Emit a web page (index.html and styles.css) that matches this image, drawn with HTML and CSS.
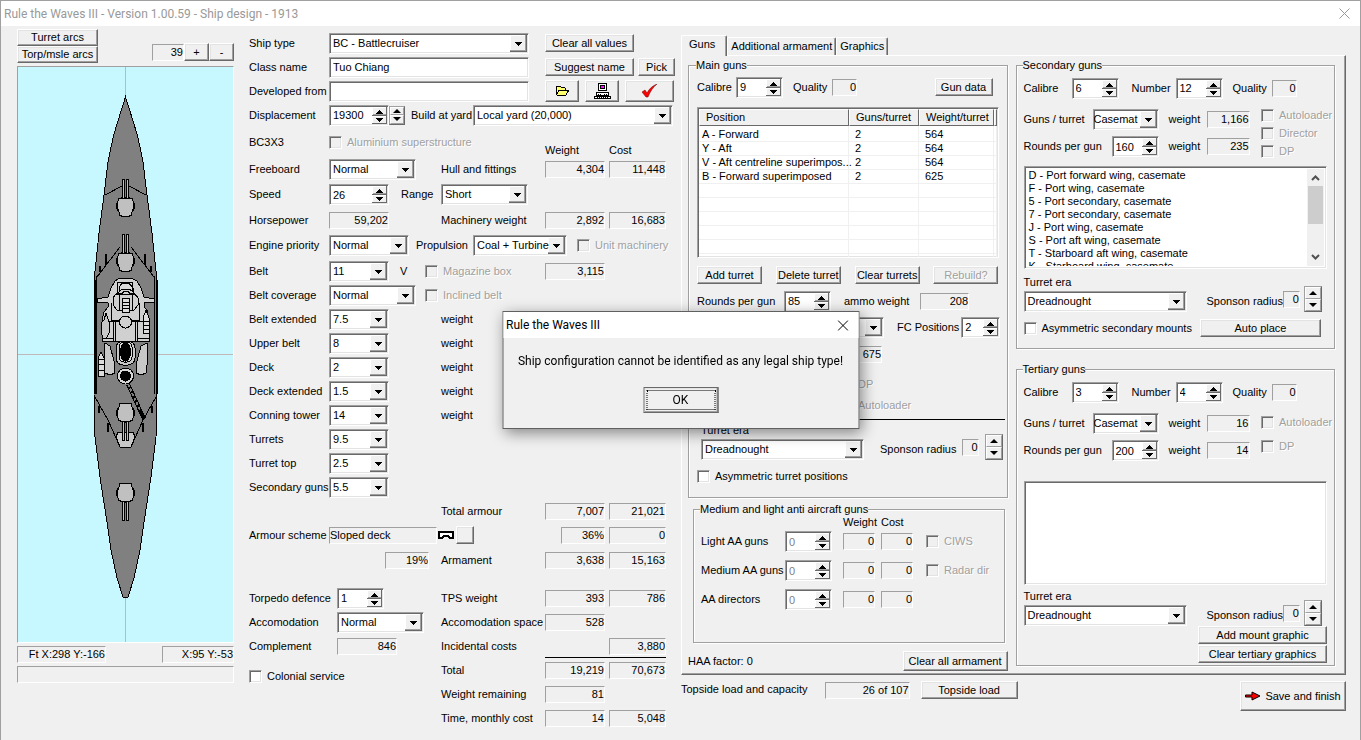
FILE: index.html
```html
<!DOCTYPE html>
<html lang="en">
<head>
    <meta charset="UTF-8">
    <meta name="viewport" content="width=device-width, initial-scale=1.0">
    <title>Rule the Waves III - Ship design</title>
    <link rel="stylesheet" href="styles.css">
</head>
<body>
    <header class="titlebar">
        <h1>Rule the Waves III - Version 1.00.59 - Ship design - 1913</h1>
        <button class="close" aria-label="Close window">
            <svg width="11" height="11" viewBox="0 0 11 11"><path d="M0.5 0.5l10 10M10.5 0.5l-10 10" stroke="#999" fill="none"/></svg>
        </button>
    </header>

    <main class="window">
        <!-- Ship drawing -->
        <section class="ship-panel">
            <div class="ship-tools">
                <div class="arcs">
                    <button class="btn">Turret arcs</button>
                    <button class="btn">Torp/msle arcs</button>
                </div>
                <div class="zoom">
                    <output class="readout">39</output>
                    <button class="btn">+</button>
                    <button class="btn">-</button>
                </div>
            </div>

            <svg class="ship" viewBox="18 67 215 575" shape-rendering="crispEdges">
                <defs>
                    <g id="turret" stroke="#000" fill="#c0c0c0">
                        <circle cx="0" cy="0" r="9" fill="#a8a8a8"/>
                        <path d="M-5 -8h10l2 1l1 4v5l-2 5v2l-2 1h-8l-2 -1v-2l-2 -5v-5l1 -4z"/>
                        <path d="M-3 -27v19h2v-19zM1 -27v19h2v-19z"/>
                    </g>
                </defs>
                <path d="M125.5 67V642M18 354.5H233" stroke="#c0b8b8"/>
                <path d="M125.5 97L129 108L133 121L137 134L140 147L143 162L147 195L152 233L155 262L157 280V394L156 437L151 477L147 503L144 522L140 550L134 578L128 597H123L117 578L111 550L107 522L104 503L100 477L95 437L94 394V280L96 262L99 233L104 195L108 162L111 147L114 134L118 121L122 108Z" fill="#808080" stroke="#000"/>
                <path d="M94.5 280V394M157 280V394" stroke="#000" stroke-width="2"/>
                <path d="M105 195L122 186M146 195L129 186M97 277L120 247M154 277L131 247M96.500 276V394M154.500 276V394M95 397L108 420L120 447M156 397L143 420L131 447" stroke="#000" fill="none"/>
                <path d="M106 254v11M145 254v11M100 266v6M151 266v6M99 406v7M152 406v7M108 423v9M143 423v9M95 344v4M157 344v4" stroke="#000" stroke-width="2"/>
                <path d="M118 432H133L135 437L131 447H120L116 437Z" fill="#c8c8c8" stroke="#000"/>

                <!-- bridge -->
                <g fill="#d0d0d0" stroke="#000">
                    <path d="M120 278H131L137 281L141 288L144 297L154 299V302L144 303V307L147 310V320H149V341H102V320L104 312L108 307V303L97 302V299L108 297L111 288L115 281Z"/>
                    <path d="M111 303V321H102M139 303V321H149M113 321V341M115 321V341M135 321V341M137 321V341M102 338H113M137 338H149" fill="none"/>
                    <path d="M118 282H132L134 293H117Z"/>
                    <path d="M120 286L122 283H129L132 287V291L129 289H122L119 292Z" fill="#dcdcdc"/>
                    <path d="M116 294H135L138 298V305L134 310H117L113 305V298Z"/>
                    <path d="M119 294V310M132 294V310" fill="none"/>
                    <path d="M122 294l2 -3h4l2 3z"/>
                    <path d="M122 298H129V312H122ZM122 302H129M122 305H129M122 308H129" fill="#dcdcdc"/>
                    <path d="M111 321H120M131 321H139" stroke-width="2"/>
                    <circle cx="125.500" cy="322" r="6"/>
                </g>

                <!-- boats -->
                <g fill="#c8c8c8" stroke="#000">
                    <path d="M106 313L109 322V333L106 339L103 338L101 331V323L104 320Z"/>
                    <path d="M146 310L149 318V333H143V318ZM143 321H149M143 325H149M143 329H149" fill="#dcdcdc"/>
                    <path d="M101 352L104 358V376H98V358ZM98 359H104M98 364H104M98 370H104" fill="#dcdcdc"/>
                    <path d="M105 343L110 346L114 361L115 373L110 375L105 373L104 358Z"/>
                    <path d="M147 343L141 346L137 361L136 373L141 375L146 373L148 358Z"/>
                </g>

                <!-- funnels and crane -->
                <g stroke="#000">
                    <rect x="116" y="341" width="19" height="24" rx="7" fill="#c8c8c8"/>
                    <rect x="119" y="342" width="13" height="20" rx="5" fill="#d8d8d8"/>
                    <ellipse cx="125.500" cy="352" rx="5" ry="9" fill="#000"/>
                    <circle cx="125.500" cy="376" r="8" fill="#d8d8d8"/>
                    <circle cx="125.500" cy="376" r="5" fill="#000"/>
                    <path d="M128 384L144 419" stroke-width="4"/>
                    <path d="M128 384L140 410" stroke="#808080" stroke-width="2" stroke-dasharray="3 2"/>
                </g>

                <use href="#turret" transform="translate(125.500 206)"/>
                <use href="#turret" transform="translate(125.500 261)"/>
                <use href="#turret" transform="translate(125.500 413) rotate(180)"/>
                <use href="#turret" transform="translate(125.500 493) rotate(180)"/>
            </svg>

            <div class="coords">
                <output class="readout feet">Ft X:298 Y:-166</output>
                <output class="readout grid-pos">X:95 Y:-53</output>
            </div>
            <output class="readout status"></output>
        </section>

        <!-- Design form -->
        <section class="design">
            <div class="row top">
                <div class="cell"><label class="name" for="shiptype">Ship type</label><select id="shiptype" class="combo long"><option>BC - Battlecruiser</option></select></div>
                <div class="actions"><button class="btn wide">Clear all values</button></div>
            </div>
            <div class="row top">
                <div class="cell"><label class="name" for="classname">Class name</label><input type="text" id="classname" class="edit long" value="Tuo Chiang"></div>
                <div class="actions"><button class="btn wide">Suggest name</button><button class="btn pick">Pick</button></div>
            </div>
            <div class="row top">
                <div class="cell"><label class="name" for="developed">Developed from</label><input type="text" id="developed" class="edit long"></div>
                <div class="actions icons">
                    <button class="btn icon" aria-label="Open">
                        <svg width="15" height="12" viewBox="0 0 15 12" shape-rendering="crispEdges"><path d="M1 9V2L2 1H5L6 2H9L10 3V5H14L11 10H2Z" fill="#ffff70" stroke="#000"/><path d="M2 9L4 5H10" fill="none" stroke="#000"/></svg>
                    </button>
                    <button class="btn icon" aria-label="Print">
                        <svg width="17" height="17" viewBox="0 0 17 17" shape-rendering="crispEdges"><path d="M4.500 .5h8v7h-8z" fill="#fff" stroke="#000"/><path d="M6.500 2.500h4v3h-4z" fill="#00c040" stroke="#000"/><path d="M8 3h1v2H8z" fill="#f0f"/><path d="M2.500 9.500h12v3h-12zM.5 13.500h16v2h-16z" fill="#fff" stroke="#000"/><path d="M4 11.500h3M10 11.500h3M3 14.500h11" stroke="#000" stroke-dasharray="1 1"/></svg>
                    </button>
                    <button class="btn icon check-btn" aria-label="Check design">
                        <svg width="17" height="14" viewBox="0 0 17 14"><path d="M1 8L4 6L6 9C8 5 11 2 16 0C12 3 9 8 7 13H5Z" fill="#f00" stroke="#600" stroke-width=".5"/></svg>
                    </button>
                </div>
            </div>
            <div class="row">
                <div class="cell all">
                    <label class="name" for="displacement">Displacement</label><input type="number" id="displacement" class="spin mid" value="19300">
                    <span class="updown mini"><button aria-label="More"></button><button aria-label="Less"></button></span>
                    <label class="yard" for="yard">Build at yard</label><select id="yard" class="combo long"><option>Local yard (20,000)</option></select>
                </div>
            </div>
            <div class="row heads">
                <div class="cell"><span class="name">BC3X3</span><label class="check off"><input type="checkbox" disabled>Aluminium superstructure</label></div>
                <span></span>
                <span class="head">Weight</span><span class="head cost">Cost</span>
            </div>
            <div class="row">
                <div class="cell"><label class="name" for="freeboard">Freeboard</label><select id="freeboard" class="combo wide"><option>Normal</option></select></div>
                <span>Hull and fittings</span><output class="readout">4,304</output><output class="readout cost">11,448</output>
            </div>
            <div class="row tall">
                <div class="cell all">
                    <label class="name" for="speed">Speed</label><input type="number" id="speed" class="spin mid" value="26">
                    <label class="range" for="range">Range</label><select id="range" class="combo wide"><option>Short</option></select>
                </div>
            </div>
            <div class="row">
                <div class="cell"><span class="name">Horsepower</span><output class="readout mid">59,202</output></div>
                <span>Machinery weight</span><output class="readout">2,892</output><output class="readout cost">16,683</output>
            </div>
            <div class="row tall">
                <div class="cell all">
                    <label class="name" for="engine">Engine priority</label><select id="engine" class="combo engine"><option>Normal</option></select>
                    <label class="prop" for="propulsion">Propulsion</label><select id="propulsion" class="combo propulsion"><option>Coal + Turbine</option></select>
                    <label class="check off unit"><input type="checkbox" disabled>Unit machinery</label>
                </div>
            </div>
            <div class="row">
                <div class="cell"><label class="name" for="belt">Belt</label><select id="belt" class="combo mid"><option>11</option></select><span class="belt-mark">V</span></div>
                <label class="check off hang"><input type="checkbox" disabled>Magazine box</label><output class="readout">3,115</output>
            </div>
            <div class="row">
                <div class="cell"><label class="name" for="coverage">Belt coverage</label><select id="coverage" class="combo wide"><option>Normal</option></select></div>
                <label class="check off hang"><input type="checkbox" disabled>Inclined belt</label>
            </div>
            <div class="row">
                <div class="cell"><label class="name" for="beltext">Belt extended</label><select id="beltext" class="combo mid"><option>7.5</option></select></div><span>weight</span>
            </div>
            <div class="row">
                <div class="cell"><label class="name" for="upper">Upper belt</label><select id="upper" class="combo mid"><option>8</option></select></div><span>weight</span>
            </div>
            <div class="row">
                <div class="cell"><label class="name" for="deck">Deck</label><select id="deck" class="combo mid"><option>2</option></select></div><span>weight</span>
            </div>
            <div class="row">
                <div class="cell"><label class="name" for="deckext">Deck extended</label><select id="deckext" class="combo mid"><option>1.5</option></select></div><span>weight</span>
            </div>
            <div class="row">
                <div class="cell"><label class="name" for="conning">Conning tower</label><select id="conning" class="combo mid"><option>14</option></select></div><span>weight</span>
            </div>
            <div class="row">
                <div class="cell"><label class="name" for="turrets">Turrets</label><select id="turrets" class="combo mid"><option>9.5</option></select></div>
            </div>
            <div class="row">
                <div class="cell"><label class="name" for="turrettop">Turret top</label><select id="turrettop" class="combo mid"><option>2.5</option></select></div>
            </div>
            <div class="row">
                <div class="cell"><label class="name" for="secguns">Secondary guns</label><select id="secguns" class="combo mid"><option>5.5</option></select></div>
            </div>
            <div class="row">
                <span></span><span>Total armour</span><output class="readout">7,007</output><output class="readout cost">21,021</output>
            </div>
            <div class="row">
                <div class="cell scheme"><span class="name">Armour scheme</span><output class="readout text">Sloped deck</output></div>
                <div class="scheme-pick">
                    <svg width="16" height="9" viewBox="0 0 16 9" shape-rendering="crispEdges"><path d="M1 1H15V7H12L10 5H6L4 7H1Z" fill="#fff" stroke="#000" stroke-width="2"/></svg>
                    <button class="btn square" aria-label="Change armour scheme"></button>
                </div>
                <output class="readout short">36%</output><output class="readout cost">0</output>
            </div>
            <div class="row tall">
                <div class="cell scheme"><output class="readout percent">19%</output></div>
                <span>Armament</span><output class="readout">3,638</output><output class="readout cost">15,163</output>
            </div>
            <div class="row spaced">
                <div class="cell"><label class="name far" for="torpedo">Torpedo defence</label><input type="number" id="torpedo" class="spin" value="1"></div>
                <span>TPS weight</span><output class="readout">393</output><output class="readout cost">786</output>
            </div>
            <div class="row">
                <div class="cell"><label class="name far" for="accom">Accomodation</label><select id="accom" class="combo wide"><option>Normal</option></select></div>
                <span>Accomodation space</span><output class="readout">528</output>
            </div>
            <div class="row">
                <div class="cell"><span class="name far">Complement</span><output class="readout">846</output></div>
                <span>Incidental costs</span><span></span><output class="readout cost">3,880</output>
            </div>
            <hr class="sum">
            <div class="row">
                <label class="check colonial"><input type="checkbox">Colonial service</label>
                <span>Total</span><output class="readout">19,219</output><output class="readout cost">70,673</output>
            </div>
            <div class="row">
                <span></span><span>Weight remaining</span><output class="readout">81</output>
            </div>
            <div class="row">
                <span></span><span>Time, monthly cost</span><output class="readout">14</output><output class="readout cost">5,048</output>
            </div>
        </section>

        <!-- Armament -->
        <section class="armament">
            <nav class="tabs">
                <button class="tab active">Guns</button>
                <button class="tab">Additional armament</button>
                <button class="tab">Graphics</button>
            </nav>
            <div class="pane">
                <div class="col">
                    <fieldset class="main-guns">
                        <legend>Main guns</legend>
                        <div class="calibre main">
                            <label for="maincal">Calibre</label><input type="number" id="maincal" class="spin" value="9">
                            <span>Quality</span><output class="readout tiny">0</output>
                            <button class="btn">Gun data</button>
                        </div>
                        <div class="listview">
                            <table>
                                <thead><tr><th class="pos">Position</th><th class="guns">Guns/turret</th><th class="wt">Weight/turret</th><th></th></tr></thead>
                                <tbody>
                                    <tr><td>A - Forward</td><td>2</td><td>564</td><td></td></tr>
                                    <tr><td>Y - Aft</td><td>2</td><td>564</td><td></td></tr>
                                    <tr><td>V - Aft centreline superimpos...</td><td>2</td><td>564</td><td></td></tr>
                                    <tr><td>B - Forward superimposed</td><td>2</td><td>625</td><td></td></tr>
                                    <tr><td></td><td></td><td></td><td></td></tr>
                                    <tr><td></td><td></td><td></td><td></td></tr>
                                    <tr><td></td><td></td><td></td><td></td></tr>
                                    <tr><td></td><td></td><td></td><td></td></tr>
                                    <tr><td></td><td></td><td></td><td></td></tr>
                                    <tr><td></td><td></td><td></td><td></td></tr>
                                </tbody>
                            </table>
                        </div>
                        <div class="turret-buttons">
                            <button class="btn">Add turret</button>
                            <button class="btn">Delete turret</button>
                            <button class="btn">Clear turrets</button>
                            <button class="btn" disabled>Rebuild?</button>
                        </div>
                        <div class="rounds">
                            <label for="mainrounds">Rounds per gun</label><input type="number" id="mainrounds" class="spin" value="85">
                            <span>ammo weight</span><output class="readout">208</output>
                        </div>
                        <div class="fire-control">
                            <select class="combo" aria-label="Fire control"><option></option></select>
                            <label for="fcpos">FC Positions</label><input type="number" id="fcpos" class="spin" value="2">
                        </div>
                        <div class="fc-weight"><output class="readout">675</output></div>
                        <div class="main-checks">
                            <label class="check off"><input type="checkbox" disabled>DP</label>
                            <label class="check off"><input type="checkbox" disabled>Autoloader</label>
                        </div>
                        <hr class="rule">
                        <div class="era">
                            <div class="era-pick"><label for="mainera">Turret era</label><select id="mainera" class="combo"><option>Dreadnought</option></select></div>
                            <span class="sponson">Sponson radius</span><output class="readout">0</output>
                            <span class="updown"><button aria-label="More"></button><button aria-label="Less"></button></span>
                        </div>
                        <div class="asym"><label class="check"><input type="checkbox">Asymmetric turret positions</label></div>
                    </fieldset>

                    <fieldset class="aa">
                        <legend>Medium and light anti aircraft guns</legend>
                        <div class="aa-row aa-head"><span></span><span></span><span>Weight</span><span>Cost</span></div>
                        <div class="aa-row">
                            <label for="lightaa">Light AA guns</label><input type="number" id="lightaa" class="spin" value="0" disabled>
                            <output class="readout">0</output><output class="readout">0</output>
                            <label class="check off"><input type="checkbox" disabled>CIWS</label>
                        </div>
                        <div class="aa-row">
                            <label for="medaa">Medium AA guns</label><input type="number" id="medaa" class="spin" value="0" disabled>
                            <output class="readout">0</output><output class="readout">0</output>
                            <label class="check off"><input type="checkbox" disabled>Radar dir</label>
                        </div>
                        <div class="aa-row">
                            <label for="aadir">AA directors</label><input type="number" id="aadir" class="spin" value="0" disabled>
                            <output class="readout">0</output><output class="readout">0</output>
                        </div>
                    </fieldset>

                    <div class="haa"><span>HAA factor: 0</span><button class="btn">Clear all armament</button></div>
                </div>

                <div class="col">
                    <fieldset class="secondary">
                        <legend>Secondary guns</legend>
                        <div class="calibre">
                            <label for="seccal">Calibre</label><input type="number" id="seccal" class="spin" value="6">
                            <label for="secnum">Number</label><input type="number" id="secnum" class="spin" value="12">
                            <span>Quality</span><output class="readout tiny">0</output>
                        </div>
                        <div class="mounts">
                            <div class="mount-rows">
                                <div class="mount"><div class="pair"><label for="secturret">Guns / turret</label><select id="secturret" class="combo"><option>Casemat</option></select></div><span>weight</span><output class="readout">1,166</output></div>
                                <div class="mount"><div class="pair"><label for="secrounds">Rounds per gun</label><input type="number" id="secrounds" class="spin" value="160"></div><span>weight</span><output class="readout">235</output></div>
                            </div>
                            <div class="mount-checks">
                                <label class="check off"><input type="checkbox" disabled>Autoloader</label>
                                <label class="check off"><input type="checkbox" disabled>Director</label>
                                <label class="check off"><input type="checkbox" disabled>DP</label>
                            </div>
                        </div>
                        <div class="listbox">
                            <ul>
                                <li>D - Port forward wing, casemate</li>
                                <li>F - Port wing, casemate</li>
                                <li>5 - Port secondary, casemate</li>
                                <li>7 - Port secondary, casemate</li>
                                <li>J - Port wing, casemate</li>
                                <li>S - Port aft wing, casemate</li>
                                <li>T - Starboard aft wing, casemate</li>
                                <li>K - Starboard wing, casemate</li>
                            </ul>
                            <div class="scrollbar">
                                <svg width="9" height="6" viewBox="0 0 9 6"><path d="M1 5L4.500 1.500L8 5" fill="none" stroke="#505050" stroke-width="2"/></svg>
                                <span class="thumb"></span>
                                <svg width="9" height="6" viewBox="0 0 9 6"><path d="M1 1L4.500 4.500L8 1" fill="none" stroke="#505050" stroke-width="2"/></svg>
                            </div>
                        </div>
                        <div class="era">
                            <div class="era-pick"><label for="secera">Turret era</label><select id="secera" class="combo"><option>Dreadnought</option></select></div>
                            <span class="sponson">Sponson radius</span><output class="readout">0</output>
                            <span class="updown"><button aria-label="More"></button><button aria-label="Less"></button></span>
                        </div>
                        <div class="asym"><label class="check"><input type="checkbox">Asymmetric secondary mounts</label><button class="btn auto">Auto place</button></div>
                    </fieldset>

                    <fieldset class="tertiary">
                        <legend>Tertiary guns</legend>
                        <div class="calibre">
                            <label for="tercal">Calibre</label><input type="number" id="tercal" class="spin" value="3">
                            <label for="ternum">Number</label><input type="number" id="ternum" class="spin" value="4">
                            <span>Quality</span><output class="readout tiny">0</output>
                        </div>
                        <div class="mounts">
                            <div class="mount-rows">
                                <div class="mount"><div class="pair"><label for="terturret">Guns / turret</label><select id="terturret" class="combo"><option>Casemat</option></select></div><span>weight</span><output class="readout">16</output></div>
                                <div class="mount"><div class="pair"><label for="terrounds">Rounds per gun</label><input type="number" id="terrounds" class="spin" value="200"></div><span>weight</span><output class="readout">14</output></div>
                            </div>
                            <div class="mount-checks loose">
                                <label class="check off"><input type="checkbox" disabled>Autoloader</label>
                                <label class="check off"><input type="checkbox" disabled>DP</label>
                            </div>
                        </div>
                        <div class="listbox"></div>
                        <div class="era">
                            <div class="era-pick"><label for="terera">Turret era</label><select id="terera" class="combo"><option>Dreadnought</option></select></div>
                            <span class="sponson">Sponson radius</span><output class="readout">0</output>
                            <span class="updown"><button aria-label="More"></button><button aria-label="Less"></button></span>
                        </div>
                        <div class="graphics">
                            <button class="btn">Add mount graphic</button>
                            <button class="btn">Clear tertiary graphics</button>
                        </div>
                    </fieldset>
                </div>
            </div>

            <div class="bottom">
                <span>Topside load and capacity</span>
                <output class="readout load">26 of 107</output>
                <button class="btn topside">Topside load</button>
                <button class="btn save">
                    <svg width="16" height="10" viewBox="0 0 16 10"><path d="M.5 4H7V1L15 5L7 9V6H.5Z" fill="#f00" stroke="#000"/></svg>
                    Save and finish
                </button>
            </div>
        </section>
    </main>

    <div class="dialog" role="dialog" aria-labelledby="dlgtitle">
        <div class="dialog-title">
            <h2 id="dlgtitle">Rule the Waves III</h2>
            <button class="close" aria-label="Close">
                <svg width="11" height="11" viewBox="0 0 11 11"><path d="M0.500 0.500l10 10M10.500 0.500l-10 10" stroke="#000" fill="none"/></svg>
            </button>
        </div>
        <p>Ship configuration cannot be identified as any legal ship type!</p>
        <button class="btn ok"><span>OK</span></button>
    </div>
</body>
</html>
```

FILE: styles.css
```css
* {
    box-sizing: border-box;
}
body {
    margin: 0;
    min-height: 100vh;
    background: #f0f0f0;
    border-top: 1px solid #a0a0a0;
    border-left: 1px solid #a0a0a0;
    border-right: 1px solid #a0a0a0;
    font: 11px/13px "Liberation Sans", Arial, sans-serif;
    color: #000;
}
button, input, select {
    font: inherit;
    color: inherit;
    margin: 0;
    border-radius: 0;
}
span, label, output {
    white-space: nowrap;
}

/* title bar */
.titlebar {
    display: flex;
    justify-content: space-between;
    align-items: center;
    height: 25px;
    padding: 0 10px 0 3px;
    background: #fff;
}
.titlebar h1 {
    margin: 0;
    font: 12px/16px Roboto, "Noto Sans", sans-serif;
    color: #999;
}
.close {
    display: flex;
    padding: 0;
    border: none;
    background: none;
}

/* shared controls */
.btn {
    height: 18px;
    padding: 0;
    border: 1px solid;
    border-color: #fff #696969 #696969 #fff;
    box-shadow: inset -1px -1px #a0a0a0, inset 1px 1px #e3e3e3;
    background: #f0f0f0;
    white-space: nowrap;
}
.btn:disabled {
    color: #a0a0a0;
    text-shadow: 1px 1px #fff;
}
.combo, .edit, .spin, .listview, .listbox {
    border: 1px solid;
    border-color: #a0a0a0 #fff #fff #a0a0a0;
    box-shadow: inset 1px 1px #696969, inset -1px -1px #e3e3e3;
    background-color: #fff;
}
.combo, .edit, .spin {
    flex: none;
    height: 21px;
    padding: 0 3px;
    outline: none;
    appearance: none;
}
.combo {
    width: 66px;
    padding-right: 17px;
    background-repeat: no-repeat;
    background-position: right 1px top 1px;
    background-image: url("data:image/svg+xml,%3Csvg xmlns='http://www.w3.org/2000/svg' width='17' height='17' shape-rendering='crispEdges'%3E%3Cpath d='M0 0h17v17H0z' fill='%23696969'/%3E%3Cpath d='M0 0h16v16H0z' fill='%23a0a0a0'/%3E%3Cpath d='M0 0h15v15H0z' fill='%23fff'/%3E%3Cpath d='M1 1h14v14H1z' fill='%23f0f0f0'/%3E%3Cpath d='M5 7h7v1H5zM6 8h5v1H6zM7 9h3v1H7zM8 10h1v1H8z'/%3E%3C/svg%3E");
}
.spin {
    width: 47px;
    appearance: textfield;
    background-repeat: no-repeat;
    background-position: right 1px top 1px;
    background-image: url("data:image/svg+xml,%3Csvg xmlns='http://www.w3.org/2000/svg' width='15' height='17' shape-rendering='crispEdges'%3E%3Cpath d='M0 0h15v17H0z' fill='%23696969'/%3E%3Cpath d='M0 0h14v8H0zM0 9h14v7H0z' fill='%23fff'/%3E%3Cpath d='M1 1h13v7H1zM1 10h13v6H1z' fill='%23f0f0f0'/%3E%3Cpath d='M1 7h13v1H1z' fill='%23a0a0a0'/%3E%3Cpath d='M7 3h1v1H7zM6 4h3v1H6zM5 5h5v1H5zM4 6h7v1H4zM4 11h7v1H4zM5 12h5v1H5zM6 13h3v1H6zM7 14h1v1H7z'/%3E%3C/svg%3E");
}
.spin::-webkit-inner-spin-button {
    display: none;
}
.spin:disabled {
    color: #808080;
}
.readout {
    display: block;
    height: 17px;
    line-height: 15px;
    border: 1px solid;
    border-color: #a0a0a0 #fff #fff #a0a0a0;
    text-align: right;
}
.check {
    display: flex;
    align-items: center;
    gap: 5px;
}
.check input {
    appearance: none;
    flex: none;
    width: 13px;
    height: 13px;
    border: 1px solid;
    border-color: #a0a0a0 #fff #fff #a0a0a0;
    box-shadow: inset 1px 1px #696969, inset -1px -1px #e3e3e3;
    background: #fff;
}
.check.off {
    color: #a0a0a0;
    text-shadow: 1px 1px #fff;
}
.check.off input {
    background: #f0f0f0;
}
.updown {
    display: flex;
    flex: none;
    flex-direction: column;
    width: 18px;
    height: 26px;
    border: 1px solid;
    border-color: #a0a0a0 #696969 #696969 #a0a0a0;
}
.updown button {
    flex: 1;
    display: flex;
    align-items: center;
    justify-content: center;
    padding: 0;
    border: 1px solid;
    border-color: #fff #a0a0a0 #a0a0a0 #fff;
    background: #f0f0f0;
}
.updown button::before {
    content: "";
    border: 4px solid transparent;
    border-top-width: 0;
    border-bottom-color: #000;
}
.updown button + button::before {
    border-width: 4px 4px 0;
    border-top-color: #000;
}
.updown.mini {
    width: 16px;
    height: 19px;
}

/* window layout */
.window {
    display: grid;
    grid-template-columns: 217px 424px 1fr;
    padding: 0 14px 0 16px;
}
.ship-panel {
    padding-top: 3px;
}
.design {
    margin-left: 15px;
    padding-top: 5px;
    width: 424px;
}
.armament {
    padding-top: 9px;
    margin-left: 23px;
}

/* ship drawing */
.ship-tools {
    display: flex;
    justify-content: space-between;
    align-items: flex-end;
    margin-bottom: 3px;
}
.arcs {
    display: flex;
    flex-direction: column;
    width: 81px;
}
.arcs .btn {
    height: 17px;
}
.zoom {
    display: flex;
    align-items: center;
    margin-bottom: 2px;
}
.zoom .readout {
    width: 32px;
}
.zoom .btn {
    width: 25px;
}
.ship {
    display: block;
    width: 100%;
    border: 1px solid;
    border-color: #a0a0a0 #fff #fff #a0a0a0;
    background: #c8f8ff;
}
.coords {
    display: flex;
    justify-content: space-between;
    margin: 3px 0;
}
.feet {
    width: 89px;
}
.grid-pos {
    width: 72px;
}

/* design form */
.row {
    display: grid;
    grid-template-columns: 192px 104px 60px 61px;
    align-items: center;
    height: 24px;
}
.row.top {
    grid-template-columns: 296px 1fr;
}
.row.tall {
    height: 27px;
}
.row.heads {
    height: 30px;
}
.row.spaced {
    margin-top: 12px;
}
.cell {
    display: flex;
    align-items: center;
}
.cell.all {
    grid-column: 1 / -1;
}
.cell .name {
    width: 80px;
    flex: none;
}
.cell .name.far {
    width: 88px;
}
.cell .readout {
    width: 60px;
}
.cost {
    margin-left: 4px;
}
.head {
    align-self: end;
}
.short {
    margin-left: 16px;
}
.long {
    width: 200px;
}
.mid {
    width: 60px;
}
.combo.wide {
    width: 87px;
}
.engine {
    width: 80px;
}
.propulsion {
    width: 94px;
}
.actions {
    display: flex;
    gap: 4px;
}
.actions.icons {
    gap: 6px;
}
.btn.wide {
    width: 89px;
}
.pick {
    width: 37px;
}
.icon {
    display: flex;
    align-items: center;
    justify-content: center;
    width: 34px;
    height: 22px;
}
.check-btn {
    width: 49px;
}
.yard {
    flex: none;
    width: 62px;
    margin-left: 6px;
}
.range {
    width: 40px;
    margin-left: 12px;
}
.prop {
    flex: none;
    width: 57px;
    margin-left: 7px;
}
.unit {
    margin-left: 10px;
}
.belt-mark {
    margin-left: 11px;
}
.hang {
    margin-left: -16px;
}
.cell.scheme {
    justify-content: flex-start;
    margin-right: 4px;
}
.cell .readout.text {
    flex: 1;
    text-align: left;
}
.cell .readout.percent {
    width: 44px;
    margin-left: auto;
    margin-right: 8px;
}
.scheme-pick {
    display: flex;
    align-items: center;
    gap: 2px;
    margin-left: -3px;
}
.square {
    width: 18px;
}
.sum {
    width: 121px;
    height: 1px;
    margin: -1px 7px 0 auto;
    border: none;
    background: #000;
}
.colonial {
    margin-top: 12px;
}

/* tab control */
.tabs {
    display: flex;
    align-items: flex-end;
    height: 20px;
}
.tab {
    height: 18px;
    padding: 0 3px;
    border: 1px solid;
    border-color: #fff #696969 transparent #fff;
    border-radius: 2px 2px 0 0;
    border-bottom: none;
    background: #f0f0f0;
    box-shadow: inset -1px 0 #a0a0a0;
}
.tab.active {
    height: 21px;
    margin-bottom: -1px;
    padding: 0 11px 3px 7px;
    position: relative;
}
.pane {
    display: grid;
    grid-template-columns: minmax(0, 1fr) minmax(0, 1fr);
    gap: 8px;
    padding: 3px 10px 3px 6px;
    border: 1px solid;
    border-color: #fff #696969 #696969 #fff;
    box-shadow: inset -1px -1px #a0a0a0;
}
fieldset {
    margin: 0;
    min-width: 0;
    padding: 4px 7px;
    border: 1px solid #a0a0a0;
    box-shadow: 1px 1px #fff, inset 1px 1px #fff;
}
legend {
    margin-left: -1px;
    padding: 0;
    background: #f0f0f0;
}
.calibre {
    display: grid;
    grid-template-columns: 48px 60px 44px 57px 39px 25px;
    align-items: center;
    height: 24px;
}
.calibre.main {
    grid-template-columns: 39px 57px 39px 1fr 58px;
    padding-right: 6px;
}
.tiny {
    width: 25px;
}

/* main guns */
.main-guns {
    padding: 3px 8px 9px;
}
.listview {
    height: 151px;
    margin-top: 8px;
    padding: 1px;
    overflow: hidden;
}
.listview table {
    width: 100%;
    table-layout: fixed;
    border-collapse: separate;
    border-spacing: 0;
}
.listview th {
    height: 17px;
    padding: 0 0 0 6px;
    border: 1px solid;
    border-color: #fff #696969 #696969 #fff;
    background: #f0f0f0;
    font-weight: normal;
    text-align: left;
}
.listview td {
    height: 14px;
    padding: 0 0 0 6px;
    border-right: 1px solid #f0f0f0;
    border-bottom: 1px solid #f0f0f0;
    white-space: nowrap;
}
.listview td:first-child {
    padding-left: 3px;
}
.listview tbody tr:first-child td {
    height: 16px;
    padding-top: 2px;
}
.listview .pos {
    width: 150px;
}
.listview .guns {
    width: 70px;
}
.listview .wt {
    width: 75px;
}
.turret-buttons {
    display: flex;
    justify-content: space-between;
    margin-top: 8px;
}
.turret-buttons .btn {
    width: 65px;
}
.rounds {
    display: grid;
    grid-template-columns: 87px 60px 76px 49px;
    align-items: center;
    height: 24px;
    margin-top: 5px;
}
.fire-control {
    display: flex;
    align-items: center;
    height: 28px;
}
.fire-control .combo {
    width: 100px;
    margin: 0 13px 0 87px;
}
.fire-control .spin {
    width: 39px;
    margin-left: 2px;
}
.fc-weight {
    display: flex;
    align-items: center;
    height: 26px;
}
.fc-weight .readout {
    width: 50px;
    margin-left: 135px;
}
.main-checks {
    margin: 7px 0 3px 143px;
}
.main-checks .check {
    height: 21px;
}
.rule {
    height: 1px;
    margin: 0 -6px 0 0;
    border: none;
    background: #000;
}
.era {
    display: flex;
    align-items: flex-end;
    margin-top: 5px;
}
.era-pick {
    display: flex;
    flex: none;
    flex-direction: column;
    gap: 2px;
    width: 163px;
}
.era-pick .combo {
    width: 100%;
}
.era .sponson {
    margin: 0 0 4px 20px;
}
.era .readout {
    width: 17px;
    margin-bottom: 4px;
}
.era .updown {
    margin-left: 4px;
}
.main-guns .era {
    margin: 4px -4px 0 4px;
}
.main-guns .era .sponson {
    margin: 0 6px 4px 16px;
}
.main-guns .era .updown {
    margin-left: 6px;
}
.asym {
    display: flex;
    align-items: center;
    justify-content: space-between;
    height: 24px;
    margin-top: 4px;
}

/* anti aircraft */
.aa {
    margin: 5px 3px 0 5px;
    padding: 0 7px 28px;
}
.aa-row {
    display: grid;
    grid-template-columns: 84px 58px 38px 45px 1fr;
    align-items: center;
    height: 29px;
}
.aa-row.aa-head {
    height: 11px;
}
.aa-row .readout {
    width: 32px;
}
.haa {
    display: flex;
    align-items: center;
    justify-content: space-between;
    margin-top: 8px;
}
.haa .btn {
    width: 105px;
    height: 20px;
}

/* secondary and tertiary */
.mounts {
    display: flex;
    justify-content: space-between;
    margin: 6px -5px 0 0;
}
.mount {
    display: grid;
    grid-template-columns: 145px 38px 43px;
    align-items: center;
    height: 27px;
}
.pair {
    display: flex;
    align-items: center;
    justify-content: space-between;
    width: 135px;
}
.pair .combo {
    padding-left: 0;
}
.mount-checks {
    display: flex;
    flex-direction: column;
    width: 71px;
}
.mount-checks .check {
    height: 18px;
}
.mount-checks.loose .check {
    height: 24px;
}
.listbox {
    display: flex;
    justify-content: space-between;
    height: 103px;
    margin-top: 6px;
    padding: 2px;
    overflow: hidden;
}
.listbox ul {
    margin: 0;
    padding: 0 2px;
    list-style: none;
    overflow: hidden;
}
.scrollbar {
    display: flex;
    flex-direction: column;
    align-items: center;
    width: 17px;
    padding: 6px 1px;
    background: #f0f0f0;
}
.thumb {
    width: 100%;
    height: 38px;
    margin: 5px 0 auto;
    background: #cdcdcd;
}
.auto {
    width: 121px;
    margin-right: 6px;
}
.secondary {
    padding-bottom: 8px;
}
.secondary .era {
    margin-top: 7px;
}
.tertiary {
    margin-top: 14px;
    padding-bottom: 2px;
}
.tertiary .listbox {
    height: 104px;
    margin-top: 17px;
}
.graphics {
    display: flex;
    flex-direction: column;
    gap: 1px;
    width: 129px;
    margin: 0 0 0 auto;
}

/* bottom bar */
.bottom {
    display: flex;
    align-items: flex-start;
    line-height: 17px;
    padding-top: 6px;
}
.load {
    width: 85px;
    margin-left: 17px;
    margin-top: 1px;
}
.topside {
    width: 97px;
    margin-left: 11px;
}
.save {
    display: flex;
    align-items: center;
    justify-content: center;
    gap: 4px;
    width: 106px;
    height: 30px;
    margin-left: auto;
}

/* message box */
.dialog {
    position: fixed;
    top: 50%;
    left: 50%;
    transform: translate(-50%, -50%);
    display: flex;
    flex-direction: column;
    align-items: center;
    width: 357px;
    height: 118px;
    border: 1px solid #606060;
    background: #f0f0f0;
    box-shadow: 2px 4px 14px rgba(0, 0, 0, 0.45);
    font: 12px/16px Roboto, "Noto Sans", sans-serif;
}
.dialog-title {
    display: flex;
    align-items: center;
    justify-content: space-between;
    align-self: stretch;
    height: 26px;
    padding: 0 10px 0 3px;
    background: #fff;
}
.dialog h2 {
    margin: 0;
    font: inherit;
}
.dialog p {
    margin: 15px 0 18px;
    white-space: nowrap;
}
.ok {
    width: 75px;
    height: 26px;
    padding: 2px;
    outline: 1px solid #696969;
    outline-offset: -1px;
}
.ok span {
    display: block;
    border: 1px dotted #000;
    line-height: 18px;
}
```
